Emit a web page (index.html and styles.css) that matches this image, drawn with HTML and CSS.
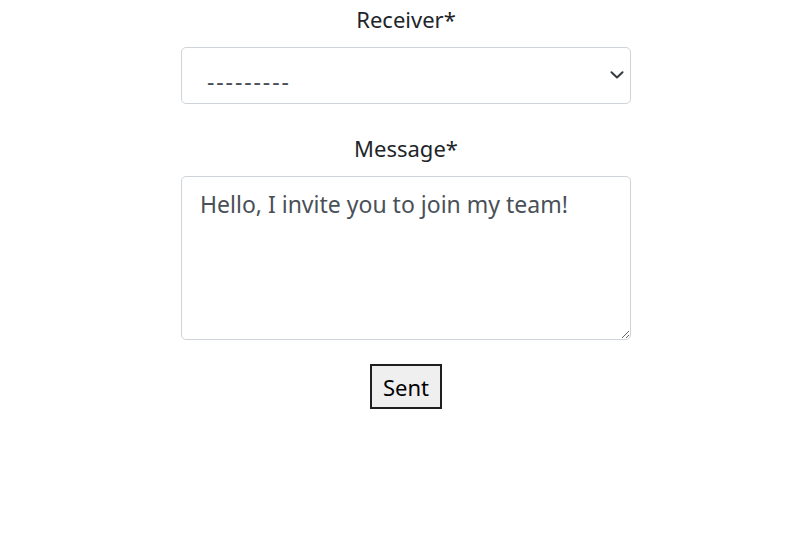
FILE: index.html
```html
<!DOCTYPE html>
<html>
<head>
<meta charset="utf-8">
<link rel="stylesheet" href="styles.css">
</head>
<body>
<form class="invite-form">
  <div class="field">
    <label class="field-label" for="receiver">Receiver*</label>
    <div class="select-wrap">
      <select id="receiver" class="field-select">
        <option>---------</option>
      </select>
      <svg class="chevron" width="14" height="8" viewBox="0 0 14 8"><path d="M1.5 1.2l5.5 5.3 5.5-5.3" fill="none" stroke="#343a40" stroke-width="2" stroke-linecap="round" stroke-linejoin="round"/></svg>
    </div>
  </div>
  <div class="field field-last">
    <label class="field-label" for="message">Message*</label>
    <textarea id="message" class="field-textarea">Hello, I invite you to join my team!</textarea>
  </div>
  <div class="actions">
    <button type="submit" class="send-btn">Sent</button>
  </div>
</form>
</body>
</html>
```

FILE: styles.css
```css
html, body {
  margin: 0;
  padding: 0;
  background: #fff;
}
body {
  font-family: "Noto Sans", "Open Sans", sans-serif;
  color: #212529;
}
.invite-form {
  width: 450px;
  margin: 0 auto;
  padding: 4px 0 0 4px;
  display: flex;
  flex-direction: column;
}
.field {
  display: flex;
  flex-direction: column;
  align-items: center;
  margin-bottom: 29px;
}
.field-last {
  margin-bottom: 0;
}
.field-label {
  font-size: 22px;
  line-height: 30px;
  margin-bottom: 13px;
}
.select-wrap {
  position: relative;
  width: 100%;
}
.field-select {
  display: block;
  width: 100%;
  height: 57px;
  box-sizing: border-box;
  border: 1px solid #ced4da;
  border-radius: 5px;
  background: #fff;
  font-family: inherit;
  font-size: 23px;
  letter-spacing: 1.9px;
  color: #495057;
  padding: 10px 16px 0 25px;
  -webkit-appearance: none;
  appearance: none;
}
.chevron {
  position: absolute;
  right: 7px;
  top: 24px;
  width: 14px;
  height: 8px;
}
.field-textarea {
  display: block;
  width: 100%;
  height: 164px;
  box-sizing: border-box;
  border: 1px solid #ced4da;
  border-radius: 5px;
  font-family: inherit;
  font-size: 23px;
  line-height: 30px;
  color: #495057;
  padding: 12px 18px;
  margin: 0;
}
.actions {
  display: flex;
  justify-content: center;
  margin-top: 24px;
}
.send-btn {
  font-family: inherit;
  font-size: 22px;
  color: #000;
  background: #efefef;
  border: 2px solid #1f1f1f;
  padding: 0;
  height: 45px;
  width: 72px;
}
```
